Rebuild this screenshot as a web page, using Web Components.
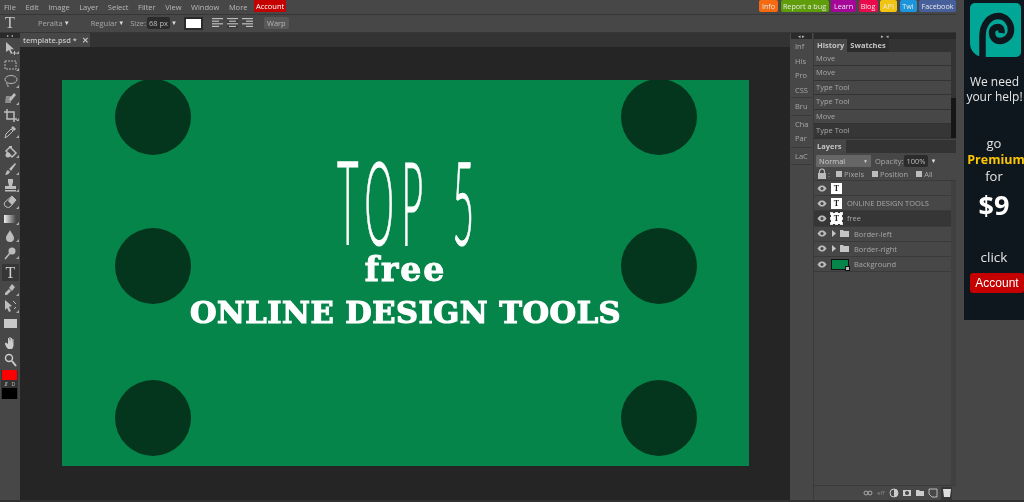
<!DOCTYPE html>
<html>
<head>
<meta charset="utf-8">
<style>
  html, body { margin: 0; height: 100%; background: #303030; }
  body { font-family: "Open Sans", sans-serif; overflow: hidden; }
  pz-app { height: 500px; background: #474747; filter: blur(.3px); }
</style>
</head>
<body>
<pz-app>
  <pz-menubar slot="top"></pz-menubar>
  <pz-options slot="top"></pz-options>
  <pz-tools slot="left"></pz-tools>
  <pz-stage slot="center"></pz-stage>
  <pz-minis slot="minis"></pz-minis>
  <pz-panels slot="panels"></pz-panels>
  <pz-ad slot="ad"></pz-ad>
</pz-app>

<script>
class PzApp extends HTMLElement {
  constructor () {
    super()
    this.attachShadow({ mode: 'open' }).innerHTML = /* html */`
      <style>
        :host { display: flex; width: 1024px; overflow: hidden; }
        .main { width: 956px; display: flex; flex-direction: column; }
        .work { flex: 1; display: flex; min-height: 0; }
        .ad { margin-left: 8px; width: 60px; }
      </style>
      <div class="main">
        <slot name="top"></slot>
        <div class="work">
          <slot name="left"></slot>
          <slot name="center"></slot>
          <slot name="minis"></slot>
          <slot name="panels"></slot>
        </div>
      </div>
      <div class="ad"><slot name="ad"></slot></div>
    `
  }
}
customElements.define('pz-app', PzApp)

class PzMenubar extends HTMLElement {
  constructor () {
    super()
    const names = ['File', 'Edit', 'Image', 'Layer', 'Select', 'Filter', 'View', 'Window', 'More']
    const links = [['Info', '#f56a10', 19], ['Report a bug', '#5f9e0a', 48], ['Learn', '#a6059a', 25], ['Blog', '#ea0a4c', 19], ['API', '#f1c40f', 17], ['Twi', '#1c95dc', 17], ['Facebook', '#47609c', 37]]
    this.attachShadow({ mode: 'open' }).innerHTML = /* html */`
      <style>
        :host { display: flex; height: 13px; padding: 0 0 1px 4px; align-items: center; font-size: 7.5px; color: #b9b9b9; border-bottom: 1px solid #363636; }
        span { margin-right: 9.500px; }
        b { font-weight: 400; color: #fff; background: #c40000; padding: 0 2px; height: 12px; line-height: 12px; border-radius: 1px; margin-left: -3px; align-self: flex-start; }
        nav { margin-left: auto; display: flex; gap: 2.500px; align-self: flex-start; }
        a { color: #e8e8e8; height: 12px; line-height: 12px; border-radius: 2px; text-align: center; white-space: nowrap; font-size: 7.2px; }
      </style>
      ${names.map(n => `<span>${n}</span>`).join('')}
      <b>Account</b>
      <nav>${links.map(l => `<a style="background:${l[1]};width:${l[2]}px">${l[0]}</a>`).join('')}</nav>
    `
  }
}
customElements.define('pz-menubar', PzMenubar)

class PzOptions extends HTMLElement {
  constructor () {
    super()
    const lines = w => `<svg width="11" height="10" viewBox="0 0 11 10">${w.map((x, i) => `<rect x="${x[0]}" y="${i * 2.6}" width="${x[1]}" height="1.2" fill="#bdbdbd"/>`).join('')}</svg>`
    this.attachShadow({ mode: 'open' }).innerHTML = /* html */`
      <style>
        :host { display: flex; height: 16px; padding-bottom: 1px; align-items: center; font-size: 7.5px; color: #a8a8a8; border-bottom: 1px solid #363636; }
        .t { width: 20px; text-align: center; font: 400 16px "Liberation Serif", serif; color: #c5c5c5; }
        .size { background: #2b2b2b; color: #bbb; padding: 0 2px; height: 12px; line-height: 12px; border-radius: 2px; margin-left: 1px; }
        .swatch { width: 15px; height: 9px; background: #fff; border: 2px solid #2a2a2a; margin: 0 9px 0 7px; flex: none; }
        .al { display: flex; gap: 4px; margin-right: 11px; }
        .al svg:nth-child(2) { background: #3a3a3a; }
        .warp { background: #585858; padding: 0 3px; height: 12px; line-height: 12px; border-radius: 2px; color: #b5b5b5; }
        i { font-style: normal; font-size: 6px; color: #ddd; margin-left: 1px; }
      </style>
      <span class="t">T</span>
      <span style="margin-left:18px">Peralta</span><i>▼</i>
      <span style="margin-left:21px">Regular</span><i>▼</i>
      <span style="margin-left:6px">Size:</span>
      <span class="size">68 px</span>
      <i style="margin-left:1px">▼</i>
      <span class="swatch"></span>
      <span class="al">
        ${lines([[0, 11], [0, 7], [0, 11], [0, 7]])}
        ${lines([[0, 11], [2, 7], [0, 11], [2, 7]])}
        ${lines([[0, 11], [4, 7], [0, 11], [4, 7]])}
      </span>
      <span class="warp">Warp</span>
    `
  }
}
customElements.define('pz-options', PzOptions)

const toolIcons = [
  '<path d="M4 2v10l3-2 2 4 1.5-.7-2-4h3.5z"/><path d="M12 11h1v1.5h1.5v1H13V15h-1v-1.500h-1.500v-1H12z"/>',
  '<path d="M3 4h11v8H3z" fill="none" stroke="#b5b5b5" stroke-width="1" stroke-dasharray="2 1"/>',
  '<ellipse cx="9" cy="6.500" rx="6" ry="4" fill="none" stroke="#b5b5b5" stroke-width="1"/><path d="M5 10c-1 1 0 2 1 2v2" fill="none" stroke="#b5b5b5"/>',
  '<path d="M4 6h5v7H3z" fill="#8d8d8d"/><path d="M7 9l5-6 2 2-5 6z"/>',
  '<path d="M5 2v10h10M2 5h10v10" fill="none" stroke="#bdbdbd" stroke-width="1.500"/>',
  '<path d="M3 14l1-4 5-5 2 2-5 5z" fill="none" stroke="#bdbdbd"/><path d="M9 4l2-2 3 3-2 2z"/>',
  '<path d="M4 7l4-4 6 6-4 4z" fill="none" stroke="#bdbdbd" stroke-width="1.500"/><circle cx="6" cy="11" r="2.500"/><path d="M7 2h3v2H7z"/>',
  '<path d="M13 2l1 1-5 7-2-2zM6 9l2 2c-1 2-3 3-5 3 1-1 1-4 3-5z"/>',
  '<path d="M6 2h5v3L10 9h4v3H3V9h4L6 5zM3 13h11v1.500H3z"/>',
  '<path d="M10 2l4 4-6 7c-2 1-4 0-5-1s-1-3 0-4z" fill="none" stroke="#bdbdbd"/><path d="M10 2l4 4-4 5-4-4z"/>',
  '',
  '<path d="M8 2c1 3 4 5 4 8a4 4 0 0 1-8 0c0-3 3-5 4-8z"/>',
  '<circle cx="10" cy="6" r="3.500"/><path d="M8 8l-5 6" stroke="#bdbdbd" stroke-width="1.500"/>',
  '',
  '<path d="M10 3l3 3-3 4-3-3zM7 8l2 2-4 4-2 0 0-2z"/>',
  '<path d="M3 2l7 6-3 1 2 4-2 1-2-4-2 2z"/><path d="M11 3l3 3M12 11l2-2" stroke="#bdbdbd"/>',
  '<rect x="2" y="4" width="13" height="9" fill="#c9c9c9"/>',
  '<path d="M6 14c-2-2-3-4-3-6l1-.5L6 9V3h1l.5 4V2h1l.5 5V3h1l.5 5V4h1v6c0 2-1 4-2 4z" fill="#ccc"/>',
  '<circle cx="7" cy="6" r="3.500" fill="none" stroke="#ccc" stroke-width="1.500"/><path d="M10 9l4 5" stroke="#ccc" stroke-width="2"/>'
]

class PzTools extends HTMLElement {
  constructor () {
    super()
    const cell = (d, i) => {
      if (i === 10) return '<div class="tool"><span class="grad"></span><u></u></div>'
      if (i === 13) return '<div class="tool on">T</div>'
      return `<div class="tool"><svg width="17" height="16" viewBox="0 0 17 16" fill="#bdbdbd">${d}</svg>${i < 16 ? '<u></u>' : ''}</div>`
    }
    const groups = [[0, 6], [6, 13], [13, 17], [17, 19]]
    this.attachShadow({ mode: 'open' }).innerHTML = /* html */`
      <style>
        :host { display: block; width: 20px; flex: none; }
        .strip { height: 5px; background: #2a2a2a; margin-bottom: 1.500px; font-size: 4px; line-height: 5px; text-align: center; color: #bbb; }
        .group { padding-bottom: 3.200px; }
        .tool { height: 16.800px; display: flex; align-items: center; justify-content: center; position: relative; color: #ccc; font: 400 16px "Liberation Serif", serif; }
        .tool.on { background: #363636; width: 17px; margin: 0 auto 0 2px; }
        .tool u { position: absolute; right: 1px; bottom: 2px; border-left: 3px solid transparent; border-bottom: 3px solid #aaa; }
        .grad { width: 12px; height: 8px; background: linear-gradient(90deg, #eee, #444); }
        .colors { margin: -1px 2px 0 1px; padding: 0 1px; background: #333; }
        .fg { height: 10px; background: #f00; }
        .mid { height: 8px; font: 5px "Open Sans", sans-serif; color: #bbb; display: flex; justify-content: space-around; line-height: 8px; }
        .bg { height: 11px; background: #000; }
      </style>
      <div class="strip">▸ ◂</div>
      ${groups.map(g => `<div class="group">${toolIcons.slice(g[0], g[1]).map((d, i) => cell(d, i + g[0])).join('')}</div>`).join('')}
      <div class="colors"><div class="fg"></div><div class="mid"><span>⇵</span><span>D</span></div><div class="bg"></div></div>
    `
  }
}
customElements.define('pz-tools', PzTools)

class PzStage extends HTMLElement {
  constructor () {
    super()
    const spots = [[53, 0], [559, 0], [53, 149], [559, 149], [53, 301], [559, 301]]
    this.attachShadow({ mode: 'open' }).innerHTML = /* html */`
      <style>
        :host { display: flex; flex-direction: column; width: 770px; flex: none; background: #252525; }
        .tabs { height: 14px; background: #333; display: flex; font-size: 7.5px; font-weight: 600; color: #c5c5c5; }
        .tab { width: 70px; background: #474747; line-height: 14px; padding-left: 3px; box-sizing: border-box; }
        .tab i { font-style: normal; margin-left: 3px; }
        .area { flex: 1; padding: 33px 0 0 42px; }
        .canvas { position: relative; width: 687px; height: 386px; background: #06854a; overflow: hidden; color: #fff; }
        .dot { position: absolute; width: 76px; height: 76px; border-radius: 50%; background: #04351d; margin-top: -1px; }
        .txt { position: absolute; left: 0; right: 0; text-align: center; white-space: nowrap; }
        .top5 { top: 76px; height: 90px; font: 300 116px/90px Lato, sans-serif; transform: scaleX(.32); letter-spacing: 24px; padding-left: 24px; word-spacing: 16px; -webkit-text-stroke: 1.200px #fff; }
        .free { top: 175px; font: 700 33px/30px "DejaVu Serif", serif; letter-spacing: 2px; -webkit-text-stroke: 1px #fff; }
        .tools { top: 210px; font: 700 30.500px/44px "DejaVu Serif", serif; letter-spacing: .5px; -webkit-text-stroke: 1.200px #fff; }
      </style>
      <div class="tabs"><div class="tab">template.psd * <i>✕</i></div></div>
      <div class="area">
        <div class="canvas">
          ${spots.map(s => `<span class="dot" style="left:${s[0]}px;top:${s[1]}px"></span>`).join('')}
          <div class="txt top5">TOP 5</div>
          <div class="txt free">free</div>
          <div class="txt tools">ONLINE DESIGN TOOLS</div>
        </div>
      </div>
    `
  }
}
customElements.define('pz-stage', PzStage)

class PzMinis extends HTMLElement {
  constructor () {
    super()
    const groups = [['Inf', 'His', 'Pro', 'CSS'], ['Bru'], ['Cha', 'Par'], ['LaC']]
    this.attachShadow({ mode: 'open' }).innerHTML = /* html */`
      <style>
        :host { display: block; width: 21px; margin: 0 1px 0 1px; flex: none; font-size: 7.5px; color: #a8a8a8; }
        .strip { height: 6px; background: #2a2a2a; font-size: 5px; line-height: 6px; text-align: center; color: #bbb; }
        .g { border-bottom: 1px solid #3a3a3a; padding: 0 0 0 4px; }
        .g div { height: 14.500px; line-height: 14.500px; }
        .g + .g { padding-top: 1px; padding-bottom: 1px; }
      </style>
      <div class="strip">◂ ▸</div>
      ${groups.map(g => `<div class="g">${g.map(n => `<div>${n}</div>`).join('')}</div>`).join('')}
    `
  }
}
customElements.define('pz-minis', PzMinis)

class PzPanels extends HTMLElement {
  constructor () {
    super()
    const hist = ['Move', 'Move', 'Type Tool', 'Type Tool', 'Move', 'Type Tool']
    this.attachShadow({ mode: 'open' }).innerHTML = /* html */`
      <style>
        :host { display: flex; flex-direction: column; flex: 1; min-width: 0; font-size: 7.5px; color: #a8a8a8; border-left: 1px solid #3a3a3a; }
        .strip { height: 6px; background: #2a2a2a; font-size: 5px; line-height: 6px; text-align: center; color: #bbb; flex: none; }
        .tabs { display: flex; height: 13px; background: #333; line-height: 13px; font-weight: 700; flex: none; color: #c5c5c5; }
        .tabs span { padding: 0 3px; }
        .tabs .on { background: #474747; }
        .hist { display: flex; height: 87px; background: #333; flex: none; }
        .list { flex: 1; }
        .list div { height: 13.400px; line-height: 13.400px; padding-left: 2px; background: #474747; margin-bottom: 1px; }
        .list div:last-child { background: #363636; }
        .sb { width: 5px; background: #333; padding-top: 46px; box-sizing: border-box; }
        .sb::after { content: ""; display: block; height: 40px; background: #161616; }
      </style>
      <div class="strip">▸ ◂</div>
      <div class="tabs"><span class="on">History</span><span style="background:#2c2c2c">Swatches</span></div>
      <div class="hist">
        <div class="list">${hist.map(h => `<div>${h}</div>`).join('')}</div>
        <div class="sb"></div>
      </div>
      <pz-layers></pz-layers>
    `
  }
}
customElements.define('pz-panels', PzPanels)

class PzLayerRow extends HTMLElement {
  constructor () {
    super()
    const kind = this.getAttribute('kind')
    const thumb = {
      text: '<span class="th">T</span>',
      sel: '<span class="th sel">T</span>',
      group: '<svg class="fold" width="18" height="9" viewBox="0 0 18 9"><path d="M1 1l4 3.500-4 3.500z" fill="#c5c5c5"/><path d="M9 1h3l1 1h5v6H9z" fill="#c5c5c5"/></svg>',
      bg: '<span class="bgth"></span>'
    }[kind]
    this.attachShadow({ mode: 'open' }).innerHTML = /* html */`
      <style>
        :host { display: flex; align-items: center; height: 14.200px; background: #474747; border-bottom: 1px solid #3a3a3a; padding-left: 3px; color: #a8a8a8; font-size: 7.5px; }
        :host([active]) { background: #363636; }
        svg.eye { margin-right: 4px; flex: none; }
        .th { width: 11px; height: 11px; background: #fff; color: #222; font: 700 8px/11px "Liberation Serif", serif; text-align: center; margin-right: 5px; flex: none; }
        .sel { outline: 1px dashed #ddd; }
        .fold { margin-right: 5px; }
        .bgth { width: 16px; height: 9px; background: #06854a; border: 1px solid #111; margin-right: 5px; position: relative; }
        .bgth::after { content: ""; position: absolute; right: -2px; bottom: -2px; width: 3px; height: 3px; background: #bbb; border: 1px solid #111; }
      </style>
      <svg class="eye" width="10" height="7" viewBox="0 0 10 7"><path d="M0.500 3.500C2 1 3.500 .5 5 .5s3 .5 4.500 3C8 6 6.500 6.500 5 6.500S2 6 .5 3.500z" fill="#bbb"/><circle cx="5" cy="3.500" r="1.500" fill="#444"/></svg>
      ${thumb}
      <slot></slot>
    `
  }
}
customElements.define('pz-layer-row', PzLayerRow)

class PzLayers extends HTMLElement {
  constructor () {
    super()
    const foot = [
      '<path d="M1 5a2 2 0 0 1 4 0 2 2 0 0 1-4 0zM5 5a2 2 0 0 1 4 0 2 2 0 0 1-4 0z" fill="none" stroke="#aaa"/>',
      '',
      '<circle cx="5" cy="5" r="4" fill="none" stroke="#ccc"/><path d="M5 1a4 4 0 0 1 0 8z" fill="#ccc"/>',
      '<path d="M1 2h8v6H1z" fill="#ccc"/><circle cx="5" cy="5" r="2" fill="#444"/>',
      '<path d="M1 2h3l1 1h4v5H1z" fill="#ccc"/>',
      '<path d="M1 1h8v8H4L1 6z" fill="none" stroke="#bbb"/>'
    ]
    this.attachShadow({ mode: 'open' }).innerHTML = /* html */`
      <style>
        :host { display: flex; flex-direction: column; flex: 1; min-height: 0; }
        .tabs { display: flex; height: 13px; background: #333; line-height: 13px; font-weight: 700; flex: none; color: #c5c5c5; margin-top: 1px; }
        .tabs span { padding: 0 4px 0 3px; background: #474747; }
        .ctl { display: flex; align-items: center; height: 13px; margin-top: 1px; padding-left: 2px; flex: none; }
        .sel { width: 55px; height: 12px; background: #666; color: #ccc; line-height: 12px; padding-left: 3px; box-sizing: border-box; display: flex; justify-content: space-between; padding-right: 3px; margin-right: 4px; border-radius: 1px; }
        .pct { background: #2b2b2b; padding: 0 2px; margin: 0 3px 0 1px; height: 12px; line-height: 12px; color: #bbb; border-radius: 2px; }
        .cb { width: 6px; height: 6px; background: #bdbdbd; margin-right: 2px; flex: none; }
        .chk { display: flex; align-items: center; height: 13px; padding-left: 3px; flex: none; }
        .chk span { margin-right: 8px; }
        .list { flex: 1; min-height: 0; display: flex; border-top: 1px solid #3a3a3a; border-bottom: 1px solid #3a3a3a; }
        .rows { flex: 1; }
        .track { width: 5px; background: #404040; }
        .foot { height: 14px; display: flex; justify-content: flex-end; align-items: center; gap: 3px; padding-right: 4px; flex: none; font-size: 6px; color: #888; }
        .foot span { width: 10px; text-align: center; }
        .foot .trash { background: #363636; width: 11px; height: 13px; display: flex; align-items: center; justify-content: center; }
      </style>
      <div class="tabs"><span>Layers</span></div>
      <div class="ctl">
        <div class="sel"><span>Normal</span><span style="font-size:5px">▼</span></div>
        <span>Opacity:</span><span class="pct">100%</span><span style="font-size:6px;color:#ddd">▼</span>
      </div>
      <div class="chk">
        <svg width="10" height="11" viewBox="0 0 10 11"><path d="M2.500 5V3.500a2.500 2.500 0 0 1 5 0V5" fill="none" stroke="#bbb" stroke-width="1.200"/><rect x="1" y="5" width="8" height="6" fill="#bbb"/></svg>
        <span style="margin:0 6px 0 1px">:</span>
        <i class="cb"></i><span>Pixels</span><i class="cb"></i><span>Position</span><i class="cb"></i><span>All</span>
      </div>
      <div class="list">
        <div class="rows">
          <pz-layer-row kind="text"></pz-layer-row>
          <pz-layer-row kind="text">ONLINE DESIGN TOOLS</pz-layer-row>
          <pz-layer-row kind="sel" active>free</pz-layer-row>
          <pz-layer-row kind="group">Border-left</pz-layer-row>
          <pz-layer-row kind="group">Border-right</pz-layer-row>
          <pz-layer-row kind="bg">Background</pz-layer-row>
        </div>
        <div class="track"></div>
      </div>
      <div class="foot">
        ${foot.map((d, i) => i === 1 ? '<span>eff</span>' : `<svg width="10" height="10" viewBox="0 0 10 10">${d}</svg>`).join('')}
        <span class="trash"><svg width="10" height="10" viewBox="0 0 10 10"><path d="M1 1h8l-1 8H2z" fill="#ddd"/></svg></span>
      </div>
    `
  }
}
customElements.define('pz-layers', PzLayers)

class PzAd extends HTMLElement {
  constructor () {
    super()
    this.attachShadow({ mode: 'open' }).innerHTML = /* html */`
      <style>
        :host { display: flex; flex-direction: column; align-items: center; width: 60px; height: 320px; background: #0f171e; color: #e6e6e6; font-family: "Open Sans", sans-serif; text-align: center; overflow: hidden; }
        svg { flex: none; }
        .help { margin-top: 14px; font-size: 12px; line-height: 15px; white-space: nowrap; margin-left: 1px; }
        .go { margin-top: 31px; font-size: 13px; line-height: 16px; }
        .prem { font-weight: 700; color: #fcc600; font-size: 12.500px; line-height: 17px; white-space: nowrap; margin-left: 4px; }
        .for { font-size: 13px; line-height: 16px; }
        .price { font-weight: 700; color: #fff; font-size: 27px; line-height: 32px; margin-top: 5px; }
        .click { margin-top: 27px; font-size: 13.500px; line-height: 18px; }
        button { margin: 7px 0 0 6px; width: 54px; height: 20px; flex: none; border: 0; border-radius: 3px; background: #c40000; color: #fff; font: 12px "Liberation Sans", sans-serif; padding: 0; }
      </style>
      <svg width="60" height="60" viewBox="0 0 60 60">
        <path d="M11 3h41a5 5 0 0 1 5 5v44a5 5 0 0 1-5 5H20C12 57 6 51 6 43V8a5 5 0 0 1 5-5z" fill="#00a796"/>
        <path d="M18.500 57V36C18.500 24 26 16 34 16C42 16 47 23 47 30C47 37 41 41 36 41C31 41 28 37 28 33C28 29 31 27 34 27C37 27 38 30 37.500 33" fill="none" stroke="#0f171e" stroke-width="6.500"/>
      </svg>
      <div class="help">We need<br>your help!</div>
      <div class="go">go</div>
      <div class="prem">Premium</div>
      <div class="for">for</div>
      <div class="price">$9</div>
      <div class="click">click</div>
      <button>Account</button>
    `
  }
}
customElements.define('pz-ad', PzAd)
</script>
</body>
</html>
